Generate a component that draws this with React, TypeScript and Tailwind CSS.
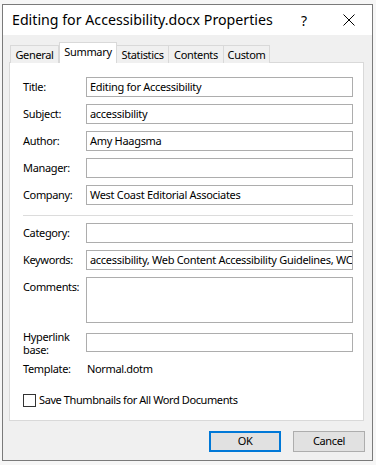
import React from "react";

const font = { fontFamily: '"Noto Sans", "Liberation Sans", sans-serif' };

function Field({ value, h = "h-[20px]" }: { value?: string; h?: string }) {
  return (
    <div className={`flex-1 ${h} border border-[#adadad] bg-white px-[3px] text-[11px] tracking-[-0.3px] leading-[18px] text-black overflow-hidden whitespace-nowrap`}>
      {value}
    </div>
  );
}

function Row({ label, value }: { label: string; value?: string }) {
  return (
    <div className="flex items-center">
      <div className="w-[63px] text-[11px] tracking-[-0.35px] text-black">{label}</div>
      <Field value={value} />
    </div>
  );
}

const tabs: { name: string; w: string }[] = [
  { name: "General", w: "w-[49px]" },
  { name: "Summary", w: "w-[58px]" },
  { name: "Statistics", w: "w-[53px]" },
  { name: "Contents", w: "w-[56px]" },
  { name: "Custom", w: "w-[47px]" },
];

export default function App() {
  return (
    <div className="w-[376px] h-[465px] bg-[#f6f6f6] pl-[2px] pt-[4px]" style={font}>
      <div className="w-[371px] h-[457px] border border-[#7a7a7a] bg-[#f0f0f0] flex flex-col">
        {/* title bar */}
        <div className="h-[30px] bg-white flex items-center pl-[9px] shrink-0">
          <div className="flex-1 text-[14.2px] text-black leading-none">Editing for Accessibility.docx Properties</div>
          <div className="w-[20px] text-center text-[14px] text-black mr-[28px]">?</div>
          <div className="w-[14px] h-[14px] mr-[16px] flex items-center justify-center">
            <svg width="12" height="12" viewBox="0 0 12 12">
              <path d="M0.5 0.5 L11.5 11.5 M11.5 0.5 L0.5 11.5" stroke="#000" strokeWidth="1" fill="none" />
            </svg>
          </div>
        </div>
        {/* body */}
        <div className="flex-1 flex flex-col px-[6px] pt-[7px]">
          <div className="flex items-end h-[21px] relative z-10 -mb-px pl-[1px]">
            {tabs.map((t) =>
              t.name === "Summary" ? (
                <div key={t.name} className={`${t.w} h-[21px] bg-white border border-[#d9d9d9] border-b-0 text-center text-[11px] tracking-[-0.35px] leading-[18px] text-black`}>
                  {t.name}
                </div>
              ) : (
                <div key={t.name} className={`${t.w} h-[18px] bg-[#f0f0f0] border border-[#d9d9d9] border-b-0 -ml-px first:ml-0 text-center text-[11px] tracking-[-0.35px] leading-[17px] text-black`}>
                  {t.name}
                </div>
              )
            )}
          </div>
          <div className="w-[355px] h-[359px] bg-white border border-[#d9d9d9] pl-[13px] pr-[10px] pt-[14px] flex flex-col">
            <div className="flex flex-col gap-[7px]">
              <Row label="Title:" value="Editing for Accessibility" />
              <Row label="Subject:" value="accessibility" />
              <Row label="Author:" value="Amy Haagsma" />
              <Row label="Manager:" />
              <Row label="Company:" value="West Coast Editorial Associates" />
            </div>
            <div className="h-px bg-[#dcdcdc] mt-[10px] mb-[7px]" />
            <div className="flex flex-col gap-[7px]">
              <Row label="Category:" />
              <Row label="Keywords:" value="accessibility, Web Content Accessibility Guidelines, WCAG" />
              <div className="flex items-start">
                <div className="w-[63px] text-[11px] tracking-[-0.35px] text-black leading-[18px] pt-px">Comments:</div>
                <Field h="h-[46px]" />
              </div>
            </div>
            <div className="flex items-center mt-[10px] h-[19px]">
              <div className="w-[63px] text-[11px] tracking-[-0.35px] text-black leading-[13px]">Hyperlink<br />base:</div>
              <Field h="h-[19px]" />
            </div>
            <div className="flex items-center mt-[9px] h-[16px] text-[11px] tracking-[-0.35px] text-black">
              <div className="w-[64px]">Template:</div>
              <div>Normal.dotm</div>
            </div>
            <div className="flex items-center mt-[17px] h-[13px] text-[11px] tracking-[-0.4px] text-black">
              <div className="w-[13px] h-[13px] border border-[#333] bg-white mr-[3px] shrink-0" />
              <div>Save Thumbnails for All Word Documents</div>
            </div>
          </div>
          <div className="flex justify-end gap-[12px] mt-[10px] pr-[1px]">
            <div className="w-[72px] h-[21px] border-2 border-[#0078d7] bg-[#e1e1e1] flex items-center justify-center text-[11px] tracking-[-0.35px] text-black">OK</div>
            <div className="w-[72px] h-[21px] border border-[#adadad] bg-[#e1e1e1] flex items-center justify-center text-[11px] tracking-[-0.35px] text-black">Cancel</div>
          </div>
        </div>
      </div>
    </div>
  );
}
